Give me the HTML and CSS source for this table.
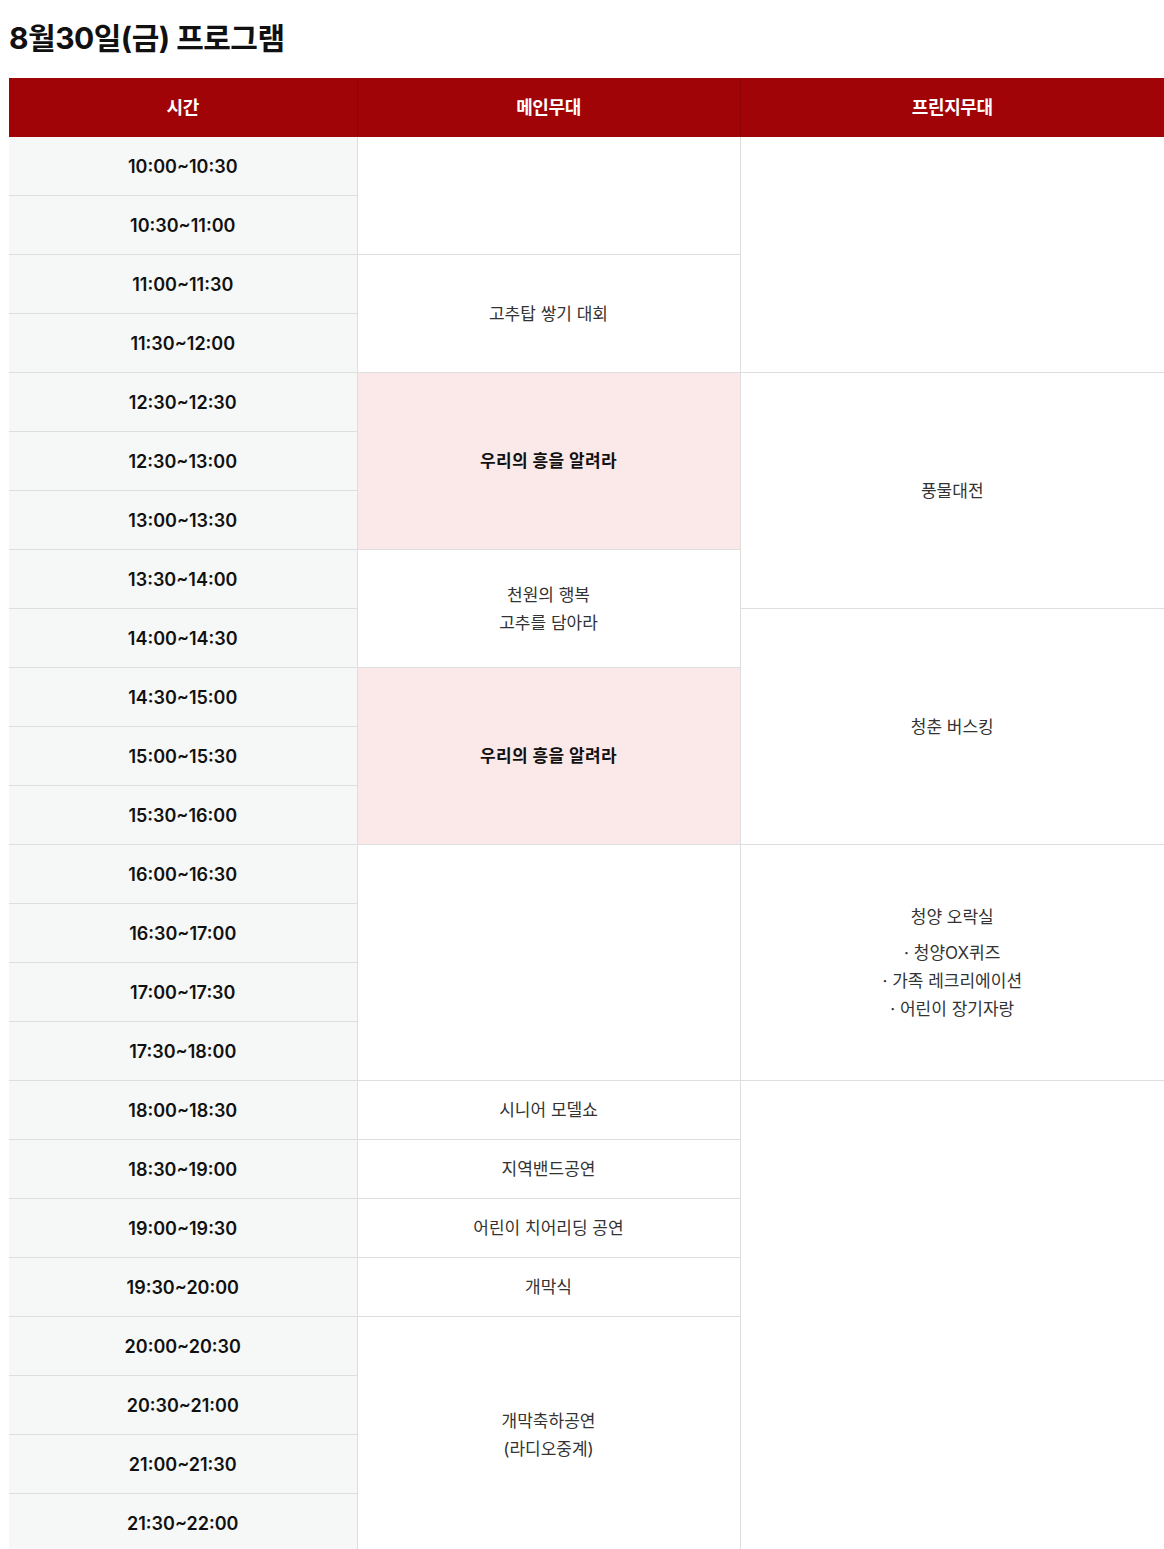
FILE: index.html
```html
<!DOCTYPE html>
<html lang="ko">
<head>
<meta charset="utf-8">
<title>8월30일(금) 프로그램</title>
<link rel="stylesheet" href="styles.css">
</head>
<body>
<div class="wrap">
  <h2 class="title">8월30일(금) 프로그램</h2>
  <table class="prog">
    <colgroup>
      <col class="c-time">
      <col class="c-main">
      <col class="c-fringe">
    </colgroup>
    <thead>
      <tr><th>시간</th><th>메인무대</th><th>프린지무대</th></tr>
    </thead>
    <tbody>
      <tr><td class="time">10:00~10:30</td><td rowspan="2"></td><td rowspan="4"></td></tr>
      <tr><td class="time">10:30~11:00</td></tr>
      <tr><td class="time">11:00~11:30</td><td rowspan="2">고추탑 쌓기 대회</td></tr>
      <tr><td class="time">11:30~12:00</td></tr>
      <tr><td class="time">12:30~12:30</td><td rowspan="3" class="hl">우리의 흥을 알려라</td><td rowspan="4">풍물대전</td></tr>
      <tr><td class="time">12:30~13:00</td></tr>
      <tr><td class="time">13:00~13:30</td></tr>
      <tr><td class="time">13:30~14:00</td><td rowspan="2">천원의 행복<br>고추를 담아라</td></tr>
      <tr><td class="time">14:00~14:30</td><td rowspan="4">청춘 버스킹</td></tr>
      <tr><td class="time">14:30~15:00</td><td rowspan="3" class="hl">우리의 흥을 알려라</td></tr>
      <tr><td class="time">15:00~15:30</td></tr>
      <tr><td class="time">15:30~16:00</td></tr>
      <tr><td class="time">16:00~16:30</td><td rowspan="4"></td><td rowspan="4">
        <p class="sub">청양 오락실</p>
        <ul class="list">
          <li>· 청양OX퀴즈</li>
          <li>· 가족 레크리에이션</li>
          <li>· 어린이 장기자랑</li>
        </ul>
      </td></tr>
      <tr><td class="time">16:30~17:00</td></tr>
      <tr><td class="time">17:00~17:30</td></tr>
      <tr><td class="time">17:30~18:00</td></tr>
      <tr><td class="time">18:00~18:30</td><td>시니어 모델쇼</td><td rowspan="8"></td></tr>
      <tr><td class="time">18:30~19:00</td><td>지역밴드공연</td></tr>
      <tr><td class="time">19:00~19:30</td><td>어린이 치어리딩 공연</td></tr>
      <tr><td class="time">19:30~20:00</td><td>개막식</td></tr>
      <tr><td class="time">20:00~20:30</td><td rowspan="4">개막축하공연<br>(라디오중계)</td></tr>
      <tr><td class="time">20:30~21:00</td></tr>
      <tr><td class="time">21:00~21:30</td></tr>
      <tr><td class="time">21:30~22:00</td></tr>
    </tbody>
  </table>
</div>
</body>
</html>
```

FILE: styles.css
```css
html, body {
  margin: 0;
  padding: 0;
  background: #fff;
}
body {
  font-family: "Inter", "Noto Sans CJK KR", sans-serif;
  color: #222;
}
.wrap {
  margin-left: 9px;
  width: 1155px;
}
.title {
  margin: 0 0 20px;
  padding-top: 18px;
  font-size: 30px;
  line-height: 40px;
  font-weight: 700;
  letter-spacing: -0.5px;
  color: #111;
}
.prog {
  width: 1155px;
  border-collapse: collapse;
  table-layout: fixed;
}
.c-time { width: 348px; }
.c-main { width: 383px; }
.c-fringe { width: 424px; }
.prog th {
  background: #a00406;
  color: #fff;
  font-size: 18px;
  font-weight: 700;
  letter-spacing: -0.4px;
  height: 56px;
  padding: 0 0 3px;
  border-right: 1px solid #8f0305;
}
.prog th:last-child { border-right: 0; }
.prog td {
  height: 58px;
  padding: 0;
  text-align: center;
  vertical-align: middle;
  border: 1px solid #dedede;
  font-size: 17px;
  line-height: 28px;
  letter-spacing: 0;
  color: #333;
}
.prog tr > td:first-child { border-left: 0; }
.prog td:last-child { border-right: 0; }
.prog tbody tr:first-child td { border-top: 0; }
.prog td.time {
  background: #f6f8f7;
  font-size: 18px;
  font-weight: 600;
  letter-spacing: 0;
  color: #111;
  height: 56px;
  padding-top: 2px;
}
.prog td.hl {
  background: #fbe9e9;
  font-weight: 700;
  letter-spacing: 0.4px;
  color: #111;
}
.sub {
  margin: 0 0 8px;
}
.list {
  list-style: none;
  margin: 0;
  padding: 0;
}
```
